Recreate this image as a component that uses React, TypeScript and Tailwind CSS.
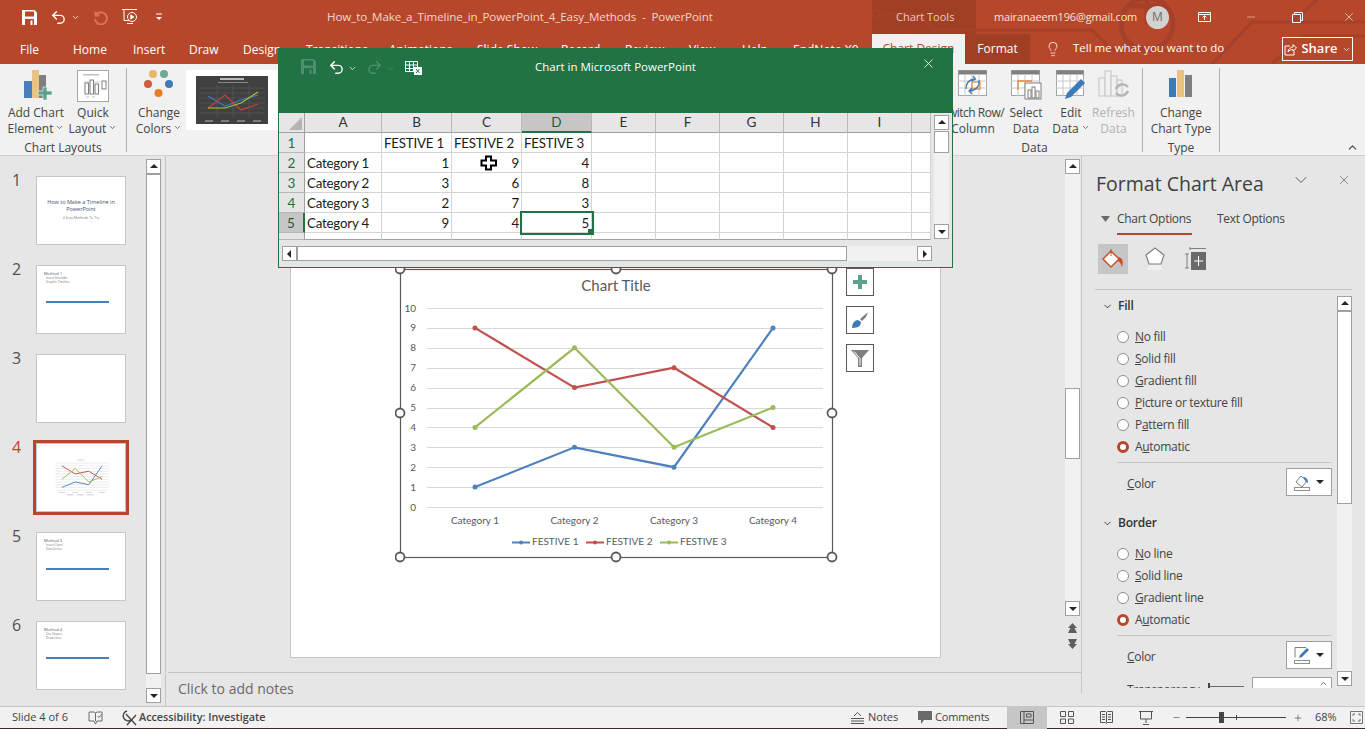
import React from "react";
import { ChevronDown, ChevronUp, Lightbulb, Minus, Plus, Redo2, Undo2, X } from "lucide-react";

const ppTabs = [
  { label: "File", cls: "w-[73px] pl-[20px]" },
  { label: "Home", cls: "w-[60px]" },
  { label: "Insert", cls: "w-[56px]" },
  { label: "Draw", cls: "w-[54px]" },
  { label: "Design", cls: "w-[63px]" },
  { label: "Transitions", cls: "w-[83px]" },
  { label: "Animations", cls: "w-[88px]" },
  { label: "Slide Show", cls: "w-[84px]" },
  { label: "Record", cls: "w-[64px]" },
  { label: "Review", cls: "w-[64px]" },
  { label: "View", cls: "w-[53px]" },
  { label: "Help", cls: "w-[51px]" },
  { label: "EndNote X9", cls: "w-[79px]" },
];

const colWidths = "grid-cols-[26px_77px_70px_70px_70px_64px_64px_64px_64px_64px_19px]";
const colNames = ["A", "B", "C", "D", "E", "F", "G", "H", "I", ""];

const sheetRows = [
  ["", "FESTIVE 1", "FESTIVE 2", "FESTIVE 3"],
  ["Category 1", "1", "9", "4"],
  ["Category 2", "3", "6", "8"],
  ["Category 3", "2", "7", "3"],
  ["Category 4", "9", "4", "5"],
];

const chartX = [475, 574.5, 674, 773];
const yFor = (v: number) => 507 - v * 19.9;
const series = [
  { color: "#4f81bd", values: [1, 3, 2, 9] },
  { color: "#c0504d", values: [9, 6, 7, 4] },
  { color: "#9bbb59", values: [4, 8, 3, 5] },
];

const Arrow = ({ dir }: { dir: "up" | "down" | "left" | "right" }) => {
  const pts = {
    up: "1,6 5,2 9,6",
    down: "1,3 9,3 5,7",
    left: "6,1 6,9 2,5",
    right: "3,1 3,9 7,5",
  }[dir];
  return (
    <svg width="10" height="10" viewBox="0 0 10 10">
      <polygon points={pts} fill="#262626" />
    </svg>
  );
};

const ScrollBtn = ({ dir }: { dir: "up" | "down" | "left" | "right" }) => (
  <div className="w-[15px] h-[15px] shrink-0 bg-white border border-[#a0a0a0] flex items-center justify-center">
    <Arrow dir={dir} />
  </div>
);

const SaveIcon = ({ color, bg }: { color: string; bg: string }) => (
  <svg width="15" height="15" viewBox="0 0 15 15">
    <path d="M0 0h12.5L15 2.5V15H0z" fill={color} />
    <rect x="3" y="1.5" width="9" height="5" fill={bg} />
    <rect x="3" y="9" width="9" height="6" fill={bg} />
    <rect x="8.5" y="10.5" width="2" height="4.5" fill={color} />
  </svg>
);

const CircuitArt = () => (
  <svg className="absolute left-[872px] top-0" width="493" height="64" viewBox="0 0 493 64" fill="none" stroke="#a5412a" strokeWidth="3">
    <circle cx="4" cy="14" r="4" />
    <path d="M8 14H46L62 30H220L240 50H330" />
    <circle cx="30" cy="40" r="10" />
    <path d="M40 40H90L104 54" />
    <circle cx="275" cy="24" r="26" strokeWidth="5" />
    <path d="M275 24V0M255 6h36" strokeWidth="5" />
    <path d="M340 64L380 22H493M420 22L445 0M400 64L430 36H493" />
    <circle cx="470" cy="50" r="5" />
  </svg>
);

const AddChartIcon = () => (
  <svg width="30" height="30" viewBox="0 0 30 30">
    <rect x="1" y="11" width="8" height="17" fill="#4a7ebb" />
    <rect x="9" y="0" width="7" height="28" fill="#eac282" />
    <rect x="16" y="5" width="7" height="23" fill="#7f7f7f" />
    <path d="M20 17h4v4h5v4h-5v5h-4v-5h-5v-4h5z" fill="#5aa28e" stroke="#f1f1f1" strokeWidth="0.7" />
  </svg>
);

const QuickLayoutIcon = () => (
  <svg width="32" height="32" viewBox="0 0 32 32" fill="none">
    <rect x="0.5" y="0.5" width="31" height="31" fill="#fff" stroke="#a6a6a6" />
    <rect x="6" y="4" width="16" height="1.5" fill="#bfbfbf" />
    <path d="M7 12h16M7 16h16M7 20h16" stroke="#d0d0d0" />
    <rect x="8" y="13" width="3.5" height="11" fill="#fff" stroke="#7f7f7f" />
    <rect x="13" y="10" width="3.5" height="14" fill="#fff" stroke="#7f7f7f" />
    <rect x="18" y="14" width="3.5" height="10" fill="#fff" stroke="#7f7f7f" />
    <rect x="25" y="11" width="4" height="8" stroke="#7f7f7f" />
    <path d="M9 27h3M15 27h3" stroke="#bfbfbf" />
  </svg>
);

const ColorsIcon = () => (
  <svg width="30" height="28" viewBox="0 0 30 28">
    <circle cx="9" cy="4" r="4" fill="#e9b66b" />
    <circle cx="20" cy="4" r="4" fill="#6ea896" />
    <circle cx="4" cy="14" r="4" fill="#cf5a3f" />
    <circle cx="25" cy="14" r="4" fill="#3d7ab8" />
    <circle cx="14.5" cy="23" r="4" fill="#e87d25" />
  </svg>
);

const DarkChartThumb = () => (
  <svg width="72" height="48" viewBox="0 0 72 48">
    <rect width="72" height="48" fill="#404040" />
    <path d="M3 12h66M3 17h66M3 22h66M3 27h66M3 32h66M3 37h66M21 9v32M37 9v32M53 9v32" stroke="#5c5c5c" strokeWidth="0.6" />
    <path d="M12 20L29 30L45 24L62 19" stroke="#3d7ab8" strokeWidth="1.2" fill="none" />
    <path d="M12 32L29 19L45 34L62 28" stroke="#c9403c" strokeWidth="1.2" fill="none" />
    <path d="M12 32L29 32L45 27L62 16" stroke="#a5c035" strokeWidth="1.2" fill="none" />
    <rect x="24" y="2" width="24" height="2" fill="#bbb" />
    <rect x="22" y="6" width="30" height="1" fill="#888" />
    <path d="M9 45h8M25 45h8M41 45h8M57 45h8" stroke="#bbb" />
  </svg>
);

const SwitchIcon = () => (
  <svg width="30" height="27" viewBox="0 0 30 27" fill="none">
    <rect x="0.5" y="0.5" width="28" height="25" fill="#fff" stroke="#a6a6a6" />
    <rect x="0.5" y="0.5" width="28" height="4" fill="#7f7f7f" />
    <path d="M0 11h29M0 18h29M7 4v22M14 4v22M21 4v22" stroke="#c8c8c8" />
    <rect x="14" y="12" width="8" height="7" stroke="#e8882f" strokeWidth="1.2" />
    <path d="M8 19c0-6 3-9 8-10M15 6l2.5 3L14 11M21 10c1 5-2 10-9 11M14 18l-3 3 3 3" stroke="#3d7ab8" strokeWidth="1.3" />
  </svg>
);

const SelectDataIcon = () => (
  <svg width="31" height="30" viewBox="0 0 31 30" fill="none">
    <rect x="0.5" y="0.5" width="28" height="25" fill="#fff" stroke="#a6a6a6" />
    <rect x="0.5" y="0.5" width="28" height="4" fill="#7f7f7f" />
    <path d="M0 11h29M0 18h29M7 4v22M14 4v22M21 4v22" stroke="#c8c8c8" />
    <path d="M7 20V11H21" stroke="#e8882f" strokeWidth="1.3" />
    <rect x="14" y="13" width="16" height="16" fill="#fff" stroke="#7f7f7f" />
    <rect x="17" y="20" width="3" height="8" fill="#fff" stroke="#7f7f7f" />
    <rect x="21" y="17" width="3" height="11" fill="#fff" stroke="#7f7f7f" />
    <rect x="25" y="21" width="3" height="7" fill="#fff" stroke="#7f7f7f" />
  </svg>
);

const EditDataIcon = () => (
  <svg width="30" height="30" viewBox="0 0 30 30" fill="none">
    <rect x="0.5" y="0.5" width="27" height="25" fill="#fff" stroke="#a6a6a6" />
    <rect x="0.5" y="0.5" width="27" height="4" fill="#7f7f7f" />
    <path d="M0 11h28M0 18h28M7 4v22M14 4v22M21 4v22" stroke="#c8c8c8" />
    <path d="M9 29l2-6L25 9l4 4L15 27z" fill="#3d7ab8" />
  </svg>
);

const RefreshIcon = () => (
  <svg width="31" height="28" viewBox="0 0 31 28" fill="none">
    <rect x="1" y="8" width="6" height="18" fill="#f1f1f1" stroke="#c4c4c4" />
    <rect x="7" y="1" width="6" height="25" fill="#f1f1f1" stroke="#c4c4c4" />
    <rect x="13" y="6" width="6" height="20" fill="#f1f1f1" stroke="#c4c4c4" />
    <rect x="19" y="10" width="5" height="16" fill="#f1f1f1" stroke="#c4c4c4" />
    <path d="M18 19a7 7 0 0 1 12-2M30 21a7 7 0 0 1-12 2" stroke="#b5b5b5" strokeWidth="2.4" />
  </svg>
);

const ChartTypeIcon = () => (
  <svg width="24" height="27" viewBox="0 0 24 27">
    <rect x="0" y="8" width="7" height="19" fill="#3d7ab8" />
    <rect x="8" y="0" width="7" height="27" fill="#eac282" />
    <rect x="16" y="5" width="7" height="22" fill="#7f7f7f" />
  </svg>
);

const RibbonBtn = ({ icon, lines, cls, grey }: { icon: React.ReactNode; lines: React.ReactNode[]; cls: string; grey?: boolean }) => (
  <div className={`flex flex-col items-center shrink-0 ${cls}`}>
    <div className="h-[40px] flex items-start justify-center pt-[6px]">{icon}</div>
    <div className={`mt-[1px] text-center text-[12px] leading-[16px] ${grey ? "text-[#b1b1b1]" : "text-[#444]"}`}>
      {lines.map((l, i) => (
        <div key={i} className="whitespace-nowrap">{l}</div>
      ))}
    </div>
  </div>
);

const Caret = () => <ChevronDown size={9} strokeWidth={2} className="inline ml-[2px] align-[1px]" />;

const Sep = () => <div className="w-px h-[84px] mt-[4px] bg-[#b1b1b1] shrink-0" />;

const Ribbon = () => (
  <div className="h-[92px] bg-[#f1f1f1] border-b border-[#d2d2d2] flex text-[#444] shrink-0">
    <div className="w-[126px] flex flex-col shrink-0">
      <div className="flex h-[76px] shrink-0">
        <RibbonBtn cls="w-[72px]" icon={<div className="ml-[3px]"><AddChartIcon /></div>} lines={["Add Chart", <>Element<Caret /></>]} />
        <RibbonBtn cls="w-[42px]" icon={<QuickLayoutIcon />} lines={["Quick", <>Layout<Caret /></>]} />
      </div>
      <div className="text-center text-[12px] leading-[16px]">Chart Layouts</div>
    </div>
    <Sep />
    <RibbonBtn cls="w-[59px] pl-[5px]" icon={<ColorsIcon />} lines={["Change", <>Colors<Caret /></>]} />
    <div className="w-[110px] h-[60px] mt-[6px] bg-white pl-[10px] pt-[6px] shrink-0">
      <DarkChartThumb />
    </div>
    <div className="flex-1" />
    <div className="w-[191px] flex flex-col shrink-0">
      <div className="flex h-[76px] shrink-0 justify-end">
        <RibbonBtn cls="w-[54px] mr-[2px]" icon={<SwitchIcon />} lines={[<span key="s" className="tracking-[-0.5px]">Switch Row/</span>, "Column"]} />
        <RibbonBtn cls="w-[48px]" icon={<SelectDataIcon />} lines={["Select", "Data"]} />
        <RibbonBtn cls="w-[42px]" icon={<EditDataIcon />} lines={[<span key="e">Edit</span>, <>Data<Caret /></>]} />
        <RibbonBtn cls="w-[43px] mr-[7px]" icon={<RefreshIcon />} grey lines={["Refresh", "Data"]} />
      </div>
      <div className="text-center text-[12px] leading-[16px] pr-[24px]">Data</div>
    </div>
    <Sep />
    <div className="w-[76px] flex flex-col shrink-0">
      <div className="h-[76px] shrink-0">
        <RibbonBtn cls="w-full" icon={<ChartTypeIcon />} lines={["Change", "Chart Type"]} />
      </div>
      <div className="text-center text-[12px] leading-[16px]">Type</div>
    </div>
    <Sep />
    <div className="w-[145px] flex items-end justify-end pr-[6px] pb-[1px]">
      <ChevronUp size={13} className="text-[#444]" />
    </div>
  </div>
);

const Header = () => (
  <div className="relative h-[64px] bg-[#b7472a] text-white shrink-0">
    <div className="absolute left-[872px] top-0 w-[104px] h-[34px] bg-[#a13f25]" />
    <CircuitArt />
    <div className="relative flex h-[34px] items-center">
      <div className="w-[327px] flex items-center pl-[22px]">
        <SaveIcon color="#fff" bg="#b7472a" />
        <Undo2 size={17} strokeWidth={2} className="ml-[13px]" />
        <ChevronDown size={9} className="ml-[4px]" />
        <svg width="16" height="16" viewBox="0 0 16 16" fill="none" stroke="#e0715a" strokeWidth="2" className="ml-[12px]">
          <path d="M3.5 2.5v4h4M4 6a6 6 0 1 1-1 4" />
        </svg>
        <svg width="18" height="18" viewBox="0 0 18 18" fill="none" stroke="#fff" className="ml-[13px]">
          <path d="M1 1.5h15M3 1.5v11h5M6 15.5h6" />
          <circle cx="11" cy="9" r="4.5" />
          <path d="M9.8 7v4l3-2z" fill="#fff" />
        </svg>
        <svg width="8" height="8" viewBox="0 0 8 8" className="ml-[16px]">
          <path d="M1 1h6" stroke="#fff" />
          <path d="M1 4h6L4 7z" fill="#fff" />
        </svg>
      </div>
      <div className="w-[569px] text-[11.6px] tracking-[-0.1px] text-[#f5d5c9] whitespace-pre">How_to_Make_a_Timeline_in_PowerPoint_4_Easy_Methods  -  PowerPoint</div>
      <div className="w-[98px] text-[11px] text-[#f0c9ba]">Chart Tools</div>
      <div className="w-[152px] text-[11px] tracking-[-0.15px] text-[#f8e3db] whitespace-nowrap">mairanaeem196@gmail.com</div>
      <div className="w-[23px] h-[23px] rounded-full bg-[#d2d2d2] text-[#6b6b6b] text-[12px] flex items-center justify-center shrink-0">M</div>
      <svg width="15" height="12" viewBox="0 0 15 12" fill="none" stroke="#fff" className="ml-[28px]">
        <path d="M1.5 1.5h12v9h-12zM1.5 3.5h12M7.5 9V5M5.5 6.5l2-2 2 2" />
      </svg>
      <Minus size={12} strokeWidth={1} className="ml-[33px]" />
      <svg width="11" height="11" viewBox="0 0 11 11" fill="none" stroke="#fff" className="ml-[35px]">
        <path d="M.5 2.5h8v8h-8zM2.5 2.5v-2h8v8h-2" />
      </svg>
      <X size={14} strokeWidth={1} className="ml-[39px]" />
    </div>
    <div className="relative flex h-[30px]">
      <div className="flex items-center text-[12px] w-[872px] pt-[1px]">
        {ppTabs.map((t) => (
          <div key={t.label} className={`${t.cls} shrink-0 whitespace-nowrap text-[#fff]`}>{t.label}</div>
        ))}
      </div>
      <div className="w-[93px] bg-[#f1f1f1] text-[#b7472a] text-[12px] flex items-center justify-center">Chart Design</div>
      <div className="w-[65px] bg-[#a13f25] text-[12px] flex items-center justify-center">Format</div>
      <Lightbulb size={16} strokeWidth={1.2} className="ml-[15px] mt-[7px]" />
      <div className="ml-[12px] w-[209px] text-[11.5px] leading-[28px] whitespace-nowrap">Tell me what you want to do</div>
      <div className="w-[71px] h-[24px] mt-[3px] border border-white flex items-center justify-center gap-[4px] text-[13px] font-semibold bg-[#b7472a]">
        <svg width="13" height="13" viewBox="0 0 13 13" fill="none" stroke="#fff">
          <path d="M6 3H1v9h9V8M4 9c0-3 3-5 5-5V1.5l3.5 3.5L9 8V6.500C7 6.500 5 7.500 4 9z" />
        </svg>
        Share
        <ChevronDown size={9} />
      </div>
    </div>
  </div>
);

const Thumb = ({ children }: { children?: React.ReactNode }) => (
  <div className="w-[90px] h-[69px] bg-white border border-[#c6c6c6] overflow-hidden relative">{children}</div>
);

const MethodThumb = ({ n, a, b }: { n: number; a: string; b: string }) => (
  <Thumb>
    <div className="pl-[7px] pt-[5px] text-[4px] leading-[5px] text-[#44546a]">Method {n}</div>
    <div className="pl-[9px] pt-[1px] text-[3px] leading-[3.500px] text-[#777]">
      <div>{a}</div>
      <div>{b}</div>
    </div>
    <div className="absolute left-[9px] top-[35px] w-[63px] h-[2px] bg-[#4a7ebb]" />
  </Thumb>
);

const MiniChart = () => (
  <Thumb>
    <svg width="88" height="67" viewBox="291 170 651 488">
      <rect x="590" y="281" width="52" height="8" fill="#d8d8d8" />
      {[0, 1, 2, 3, 4, 5, 6, 7, 8, 9, 10].map((v) => (
        <path key={v} d={`M427 ${yFor(v)}H823`} stroke="#dedede" strokeWidth="4" />
      ))}
      {series.map((s) => (
        <polyline key={s.color} points={s.values.map((v, i) => `${chartX[i]},${yFor(v)}`).join(" ")} fill="none" stroke={s.color} strokeWidth="7" />
      ))}
      <path d="M452 524h46M551 524h46M651 524h46M750 524h46" stroke="#c4c4c4" strokeWidth="5" />
      <path d="M512 542h50M586 542h50M660 542h50" stroke="#a8b8cc" strokeWidth="5" />
    </svg>
  </Thumb>
);

const SlideRow = ({ n, active, children }: { n: number; active?: boolean; children: React.ReactNode }) => (
  <div className="flex h-[69px] mb-[20px]">
    <div className={`w-[36px] pl-[12px] -mt-[3px] text-[16px] leading-[14px] ${active ? "text-[#b7472a]" : "text-[#505050]"}`}>{n}</div>
    <div className={active ? "ring-[3px] ring-[#b7472a]" : ""}>{children}</div>
  </div>
);

const SlidePanel = () => (
  <div className="w-[166px] shrink-0 border-r border-[#c6c6c6] flex">
    <div className="w-[146px] pt-[20px] overflow-hidden">
      <SlideRow n={1}>
        <Thumb>
          <div className="pt-[22px] text-center text-[5.500px] leading-[7px] text-[#44546a] px-[6px]">How to Make a Timeline in PowerPoint</div>
          <div className="pt-[2px] text-center text-[3.500px] text-[#7a7a7a]">4 Easy Methods To Try</div>
        </Thumb>
      </SlideRow>
      <SlideRow n={2}><MethodThumb n={1} a="Insert SmartArt" b="Graphic Timeline" /></SlideRow>
      <SlideRow n={3}><Thumb /></SlideRow>
      <SlideRow n={4} active><MiniChart /></SlideRow>
      <SlideRow n={5}><MethodThumb n={3} a="Insert Chart" b="Data Series" /></SlideRow>
      <SlideRow n={6}><MethodThumb n={4} a="Use Shapes" b="Draw Lines" /></SlideRow>
    </div>
    <div className="w-[15px] mt-[3px] h-[544px] bg-[#f1f1f1] flex flex-col">
      <ScrollBtn dir="up" />
      <div className="h-[500px] bg-white border border-[#a0a0a0]" />
      <div className="mt-auto"><ScrollBtn dir="down" /></div>
    </div>
  </div>
);

const ChartSvg = () => (
  <svg width="445" height="305" viewBox="395 260 445 305" className="shrink-0 font-['Lato',sans-serif]">
    <text x="616" y="291" textAnchor="middle" fontSize="15" fill="#595959">Chart Title</text>
    {[0, 1, 2, 3, 4, 5, 6, 7, 8, 9, 10].map((v) => (
      <g key={v}>
        <path d={`M427 ${Math.round(yFor(v)) + 0.5}H823`} stroke="#d9d9d9" />
        <text x="416" y={yFor(v) + 3.500} textAnchor="end" fontSize="10" fill="#595959">{v}</text>
      </g>
    ))}
    {series.map((s) => (
      <g key={s.color}>
        <polyline points={s.values.map((v, i) => `${chartX[i]},${yFor(v)}`).join(" ")} fill="none" stroke={s.color} strokeWidth="2.200" />
        {s.values.map((v, i) => (
          <circle key={i} cx={chartX[i]} cy={yFor(v)} r="2.500" fill={s.color} />
        ))}
      </g>
    ))}
    {["Category 1", "Category 2", "Category 3", "Category 4"].map((c, i) => (
      <text key={c} x={chartX[i]} y="524" textAnchor="middle" fontSize="10" fill="#595959">{c}</text>
    ))}
    {series.map((s, i) => {
      const x = 512 + i * 74;
      return (
        <g key={s.color}>
          <path d={`M${x} 542.500h18`} stroke={s.color} strokeWidth="2" />
          <circle cx={x + 9} cy="542.500" r="2" fill={s.color} />
          <text x={x + 20} y="545" fontSize="10" fill="#595959">FESTIVE {i + 1}</text>
        </g>
      );
    })}
    <rect x="400.500" y="269.500" width="432" height="288" fill="none" stroke="#595959" strokeWidth="1.200" />
    {[[400, 269], [616, 269], [832, 269], [400, 413], [832, 413], [400, 557], [616, 557], [832, 557]].map(([x, y]) => (
      <circle key={`${x}-${y}`} cx={x} cy={y} r="4.500" fill="#fff" stroke="#595959" strokeWidth="1.800" />
    ))}
  </svg>
);

const ChartBtn = ({ children }: { children: React.ReactNode }) => (
  <div className="w-[28px] h-[28px] bg-white border border-[#595959] flex items-center justify-center">{children}</div>
);

const CenterPane = () => (
  <div className="w-[915px] shrink-0 flex flex-col">
    <div className="h-[516px] flex">
      <div className="w-[899px] pl-[124px] pt-[14px]">
        <div className="w-[651px] h-[488px] bg-white border border-[#c6c6c6] pl-[104px] pt-[89px] flex">
          <ChartSvg />
          <div className="ml-[6px] mt-[8px] flex flex-col gap-[10px]">
            <ChartBtn>
              <svg width="14" height="14" viewBox="0 0 14 14"><path d="M5 0h4v5h5v4H9v5H5V9H0V5h5z" fill="#5aa28e" /></svg>
            </ChartBtn>
            <ChartBtn>
              <svg width="18" height="18" viewBox="0 0 18 18">
                <path d="M9 8L17 1l-2 5-4 4z" fill="#7f7f7f" />
                <path d="M1 17c0-5 3-8 6-8l3 2c0 3-2 6-9 6z" fill="#3d7ab8" />
              </svg>
            </ChartBtn>
            <ChartBtn>
              <svg width="18" height="17" viewBox="0 0 18 17">
                <path d="M0 0h18l-7 8v9H7V8z" fill="#7f7f7f" />
                <path d="M3 1.500l6 7v7" fill="none" stroke="#fff" />
              </svg>
            </ChartBtn>
          </div>
        </div>
      </div>
      <div className="w-[15px] flex flex-col">
        <div className="mt-[3px] h-[457px] bg-[#f1f1f1] flex flex-col">
          <ScrollBtn dir="up" />
          <div className="mt-[214px] h-[71px] bg-white border border-[#a0a0a0]" />
          <div className="mt-auto"><ScrollBtn dir="down" /></div>
        </div>
        <svg width="15" height="28" viewBox="0 0 15 28" className="mt-[6px]" fill="#5f5f5f">
          <path d="M7.500 1L12 6H9.500L12 11H3L5.500 6H3z" />
          <path d="M3 17h9L9.500 22H12L7.500 27L3 22h2.500z" />
        </svg>
      </div>
    </div>
    <div className="flex-1 ml-[2px] border-t border-[#c6c6c6] pl-[10px] text-[14px] text-[#6a6a6a] leading-[32px]">Click to add notes</div>
  </div>
);

const Radio = ({ on }: { on?: boolean }) => (
  <span className={`w-[12px] h-[12px] rounded-full bg-white shrink-0 ${on ? "border-[3px] border-[#b7472a]" : "border border-[#8f8f8f]"}`} />
);

const RadioRow = ({ on, children }: { on?: boolean; children: React.ReactNode }) => (
  <div className="h-[22px] flex items-center pl-[35px] gap-[6px] text-[12px] tracking-[-0.3px] text-[#444] whitespace-nowrap">
    <Radio on={on} />
    <span>{children}</span>
  </div>
);

const ColorRow = ({ icon, cls }: { icon: React.ReactNode; cls: string }) => (
  <div className={`flex items-center h-[28px] ml-[45px] w-[205px] justify-between text-[12px] tracking-[-0.3px] text-[#444] ${cls}`}>
    <span className="pt-[4px]"><u>C</u>olor</span>
    <div className="w-[46px] h-[28px] bg-white border border-[#a0a0a0] flex items-center justify-center gap-[5px]">
      {icon}
      <Arrow dir="down" />
    </div>
  </div>
);

const BucketBtnIcon = () => (
  <svg width="16" height="17" viewBox="0 0 16 17" fill="none">
    <path d="M2 8l5-6 6 5-5 6z" fill="#fff" stroke="#7f7f7f" />
    <path d="M9 3c3 0 5 2 5 6l-2-1z" fill="#3d7ab8" />
    <rect x="0.500" y="13.500" width="15" height="3" fill="#fff" stroke="#8f8f8f" />
  </svg>
);

const PenBtnIcon = () => (
  <svg width="16" height="17" viewBox="0 0 16 17" fill="none">
    <path d="M12 .500H1v10" stroke="#7f7f7f" />
    <path d="M5 11l1-3 7-7 2 2-7 7z" fill="#3d7ab8" />
    <rect x="0.500" y="13.500" width="15" height="3" fill="#fff" stroke="#8f8f8f" />
  </svg>
);

const SectionHead = ({ label, cls }: { label: string; cls: string }) => (
  <div className={`h-[18px] flex items-center pl-[20px] gap-[5px] text-[12px] tracking-[-0.2px] font-semibold text-[#333] ${cls}`}>
    <ChevronDown size={11} strokeWidth={2} />
    {label}
  </div>
);

const FormatPane = () => (
  <div className="w-[284px] shrink-0 h-[537px] border-l border-[#c6c6c6] flex flex-col">
    <div className="h-[56px] flex items-center pl-[14px] text-[19.5px] text-[#404040] leading-none">
      <span className="w-[195px] whitespace-nowrap">Format Chart Area</span>
      <ChevronDown size={20} strokeWidth={1} className="-mt-[8px]" />
      <X size={14} strokeWidth={1} className="ml-[26px] -mt-[8px]" />
    </div>
    <div className="h-[23px] flex text-[12px] tracking-[-0.3px] text-[#444] pl-[19px]">
      <svg width="9" height="6" viewBox="0 0 9 6" className="mt-[4px]"><path d="M0 0h9L4.500 6z" fill="#6a6a6a" /></svg>
      <div className="ml-[7px] w-[75px] h-[23px] border-b-2 border-[#b7472a] whitespace-nowrap leading-[13px]">Chart Options</div>
      <div className="ml-[25px] whitespace-nowrap leading-[13px]">Text Options</div>
    </div>
    <div className="mt-[9px] pl-[16px] flex items-center h-[30px]">
      <div className="w-[30px] h-[30px] bg-[#c6c6c6] flex items-center justify-center">
        <svg width="24" height="22" viewBox="0 0 24 22" fill="none">
          <path d="M2 11l8-8 8 8-8 8z" fill="#fff" stroke="#c9502f" strokeWidth="1.500" />
          <path d="M10 1v7" stroke="#c9502f" />
          <path d="M18 9c3 1 5 4 3 10-1-3-2-5-4-6z" fill="#c9502f" />
        </svg>
      </div>
      <svg width="22" height="24" viewBox="0 0 22 24" className="ml-[16px]">
        <path d="M11 1l9 7-3 9H5L2 8z" fill="#fff" stroke="#7f7f7f" strokeWidth="1.200" />
        <path d="M5 18h12l2 5H3z" fill="#f0f0f0" />
      </svg>
      <svg width="22" height="24" viewBox="0 0 22 24" className="ml-[18px]" fill="none">
        <path d="M6 1.500h16M6 0v3M1 7h4M1 21h4M3 7v14" stroke="#7f7f7f" />
        <rect x="7" y="5" width="15" height="18" fill="#6a6a6a" />
        <path d="M14.500 9v10M10 14h9" stroke="#fff" />
      </svg>
    </div>
    <div className="mt-[15px] ml-[13px] w-[257px] h-px bg-[#c6c6c6]" />
    <div className="mt-[6px] h-[392px] flex">
      <div className="w-[255px] h-[392px] pt-[1px] overflow-hidden">
        <SectionHead label="Fill" cls="" />
        <div className="mt-[11px]">
          <RadioRow><u>N</u>o fill</RadioRow>
          <RadioRow><u>S</u>olid fill</RadioRow>
          <RadioRow><u>G</u>radient fill</RadioRow>
          <RadioRow><u>P</u>icture or texture fill</RadioRow>
          <RadioRow>P<u>a</u>ttern fill</RadioRow>
          <RadioRow on>A<u>u</u>tomatic</RadioRow>
        </div>
        <div className="mt-[4px] ml-[35px] w-[215px] h-px bg-[#c6c6c6]" />
        <ColorRow cls="mt-[5px]" icon={<BucketBtnIcon />} />
        <SectionHead label="Border" cls="mt-[18px]" />
        <div className="mt-[11px]">
          <RadioRow><u>N</u>o line</RadioRow>
          <RadioRow><u>S</u>olid line</RadioRow>
          <RadioRow><u>G</u>radient line</RadioRow>
          <RadioRow on>A<u>u</u>tomatic</RadioRow>
        </div>
        <div className="mt-[4px] ml-[35px] w-[215px] h-px bg-[#c6c6c6]" />
        <ColorRow cls="mt-[5px]" icon={<PenBtnIcon />} />
        <div className="mt-[8px] ml-[45px] flex items-start text-[12px] tracking-[-0.3px] text-[#444]">
          <span className="w-[81px] mt-[1px] leading-[24px]">Transparency</span>
          <div className="relative w-[36px] h-px bg-[#6a6a6a] mt-[9px] shrink-0">
            <div className="absolute left-0 -top-[3px] w-[2px] h-[7px] bg-[#444]" />
          </div>
          <div className="ml-[8px] w-[80px] h-[24px] bg-white border border-[#a0a0a0] flex justify-end pr-[3px] pt-[1px]">
            <ChevronUp size={9} strokeWidth={2} />
          </div>
        </div>
      </div>
      <div className="w-[15px] h-[390px] bg-[#f1f1f1] flex flex-col">
        <ScrollBtn dir="up" />
        <div className="h-[193px] bg-white border border-[#a0a0a0]" />
        <div className="mt-auto"><ScrollBtn dir="down" /></div>
      </div>
    </div>
  </div>
);

const StatusBar = () => (
  <div className="h-[23px] bg-[#f1f1f1] border-t border-[#c6c6c6] border-b-[#3a2a28] border-b flex items-center text-[11px] text-[#444] shrink-0 whitespace-nowrap">
    <span className="w-[88px] pl-[12px]">Slide 4 of 6</span>
    <svg width="15" height="14" viewBox="0 0 15 14" fill="none" stroke="#6a6a6a"><path d="M1 1h5l1.500 1L9 1h5v9H9l-1.500 3L6 10H1zM7.500 2v8M9.500 5l1.500 1.500 2.500-3" /></svg>
    <svg width="18" height="16" viewBox="0 0 18 16" fill="none" stroke="#444" strokeWidth="1.300" className="ml-[16px]">
      <path d="M8 1a5 5 0 1 0 4 9M7 4l10 11M17 5L8 15" />
    </svg>
    <span className="ml-[2px] w-[712px] font-semibold text-[10.800px]">Accessibility: Investigate</span>
    <svg width="13" height="12" viewBox="0 0 13 12" fill="none" stroke="#555"><path d="M0 6.500h13M0 9h13M0 11.500h13M3 4L6.500.5 10 4" /></svg>
    <span className="ml-[4px] w-[50px]">Notes</span>
    <svg width="14" height="14" viewBox="0 0 14 14"><path d="M0 0h14v9H6l-3 4V9H0z" fill="#6a6a6a" /></svg>
    <span className="ml-[3px] w-[72px] tracking-[-0.2px]">Comments</span>
    <div className="w-[40px] h-[22px] bg-[#c6c6c6] flex items-center justify-center">
      <svg width="14" height="13" viewBox="0 0 14 13" fill="none" stroke="#555"><path d="M.5.5h13v12H.5zM4 .5v12M6.500 3h4.500v3H6.500zM4 9h9.500" /></svg>
    </div>
    <svg width="14" height="13" viewBox="0 0 14 13" fill="none" stroke="#555" className="ml-[13px]"><path d="M.5.5h5v5h-5zM8.500.5h5v5h-5zM.5 8h5v4.500h-5zM8.500 8h5v4.500h-5z" /></svg>
    <svg width="13" height="13" viewBox="0 0 13 13" fill="none" stroke="#555" className="ml-[26px]"><path d="M.5.5h5l1 1 1-1h5v11h-5l-1 1-1-1h-5zM6.500 1.500v10M2 3.500h3M2 6h3M2 8.500h3M8 3.500h3M8 6h3M8 8.500h3" /></svg>
    <svg width="14" height="14" viewBox="0 0 14 14" fill="none" stroke="#555" className="ml-[26px]"><path d="M0 .5h14M1.500.5v7.500h11V.5M7 8v4M4 13.500h6" /></svg>
    <Minus size={9} strokeWidth={1.500} className="ml-[19px]" />
    <div className="relative ml-[5px] w-[100px] h-px bg-[#444]">
      <div className="absolute left-[33px] -top-[5px] w-[5px] h-[11px] bg-[#444]" />
      <div className="absolute left-[50px] -top-[2px] w-px h-[5px] bg-[#444]" />
    </div>
    <Plus size={10} strokeWidth={1.500} className="ml-[7px]" />
    <span className="ml-[12px] w-[35px]">68%</span>
    <svg width="13" height="13" viewBox="0 0 13 13" fill="none" stroke="#777"><path d="M.5.5h12v12H.5zM3 5V3h2M8 3h2v2M10 8v2H8M5 10H3V8" /></svg>
  </div>
);

const HeaderCell = ({ label, active }: { label: string; active?: boolean }) => (
  <div className={`h-[20px] flex items-center justify-center text-[13.500px] border-r border-[#b8b8b8] ${active ? "bg-[#c6c6c6] border-b-2 border-b-[#217346] text-[#1f5c3a]" : "bg-[#e6e6e6] border-b border-b-[#a0a0a0] text-[#333]"}`}>
    {label}
  </div>
);

const RowHead = ({ n, active }: { n?: number; active?: boolean }) => (
  <div className={`flex items-center justify-center text-[13.500px] border-b border-[#b8b8b8] ${n ? "h-[20px] pt-[2px]" : "h-[7px]"} ${active ? "bg-[#c6c6c6] border-r-2 border-r-[#217346] text-[#1f5c3a]" : "bg-[#e6e6e6] border-r border-r-[#a0a0a0] text-[#217346]"}`}>
    {n}
  </div>
);

const Sheet = () => (
  <div className={`grid ${colWidths} font-['Lato',sans-serif] w-[652px] h-[127px] shrink-0`}>
    <div className="h-[20px] bg-[#e6e6e6] border-r border-b border-[#a0a0a0] flex items-end justify-end pr-[2px] pb-[2px]">
      <svg width="13" height="13" viewBox="0 0 13 13"><path d="M13 0v13H0z" fill="#b4b4b4" /></svg>
    </div>
    {colNames.map((c) => (
      <HeaderCell key={c || "j"} label={c} active={c === "D"} />
    ))}
    {sheetRows.map((row, r) => (
      <React.Fragment key={r}>
        <RowHead n={r + 1} active={r === 4} />
        {colNames.map((c, i) => {
          const val = row[i] ?? "";
          const isNum = /^\d+$/.test(val);
          const selected = r === 4 && i === 3;
          return (
            <div key={c || "j"} className={`relative h-[20px] bg-white border-r border-b border-[#d4d4d4] flex items-center pt-[2px] text-[13.300px] tracking-[-0.2px] text-[#1a1a1a] whitespace-nowrap px-[2px] ${isNum ? "justify-end" : ""} ${selected ? "z-10 outline-2 outline-[#217346]" : ""}`}>
              {val}
              {selected && <div className="absolute -right-[3px] -bottom-[3px] w-[6px] h-[6px] bg-[#217346]" />}
            </div>
          );
        })}
      </React.Fragment>
    ))}
    <RowHead />
    {colNames.map((c) => (
      <div key={c || "j"} className="h-[7px] bg-white border-r border-[#d4d4d4] border-b border-b-[#a0a0a0]" />
    ))}
  </div>
);

const ExcelWindow = () => (
  <div className="absolute left-[278px] top-[48px] w-[675px] h-[220px] z-10 border border-[#217346] bg-[#e6e6e6] flex flex-col">
    <div className="relative h-[64px] bg-[#217346] flex items-start pt-[10px] pl-[22px] text-white shrink-0">
      <SaveIcon color="#4f8f6c" bg="#217346" />
      <Undo2 size={17} strokeWidth={2} className="ml-[12px]" />
      <ChevronDown size={9} className="ml-[3px] mt-[5px]" />
      <Redo2 size={17} strokeWidth={2} className="ml-[9px] text-[#4f8f6c]" />
      <ChevronDown size={9} className="ml-[3px] mt-[5px] text-[#4f8f6c]" />
      <svg width="17" height="16" viewBox="0 0 17 16" className="ml-[10px]" fill="none" stroke="#fff">
        <path d="M.5 2.500h12v10H.5zM.5 2.500h12M.5 6h12M.5 9.500h12M4.500 2.500v10M8.500 2.500v10" />
        <rect x="9" y="8" width="8" height="8" fill="#fff" stroke="none" />
        <path d="M11 10l3.500 4M14.500 10L11 14" stroke="#217346" />
      </svg>
      <span className="absolute left-0 right-0 top-[9px] text-center text-[11.500px]">Chart in Microsoft PowerPoint</span>
      <X size={15} strokeWidth={1.300} className="absolute right-[16px] top-[7px]" />
    </div>
    <div className="flex h-[127px] shrink-0">
      <Sheet />
      <div className="ml-[3px] w-[15px] h-[124px] mt-[2px] bg-[#f1f1f1] flex flex-col">
        <ScrollBtn dir="up" />
        <div className="mt-[1px] h-[22px] bg-white border border-[#a0a0a0]" />
        <div className="mt-auto"><ScrollBtn dir="down" /></div>
      </div>
    </div>
    <div className="ml-[3px] mt-[6px] w-[650px] h-[15px] bg-[#f1f1f1] flex">
      <ScrollBtn dir="left" />
      <div className="w-[550px] bg-white border border-[#a0a0a0]" />
      <div className="ml-auto"><ScrollBtn dir="right" /></div>
    </div>
    <svg width="18" height="16" viewBox="0 0 18 16" className="absolute z-20 left-[201px] top-[106px]">
      <path d="M6 1.500h5v4h5v5h-5v4H6v-4H1.500v-5H6z" fill="#fff" stroke="#000" strokeWidth="2" />
    </svg>
  </div>
);

export default function App() {
  return (
    <div className="relative w-[1365px] h-[729px] overflow-hidden bg-[#e6e6e6] flex flex-col font-['Open_Sans',sans-serif]">
      <Header />
      <Ribbon />
      <div className="flex h-[550px] shrink-0">
        <SlidePanel />
        <CenterPane />
        <FormatPane />
      </div>
      <StatusBar />
      <ExcelWindow />
    </div>
  );
}
